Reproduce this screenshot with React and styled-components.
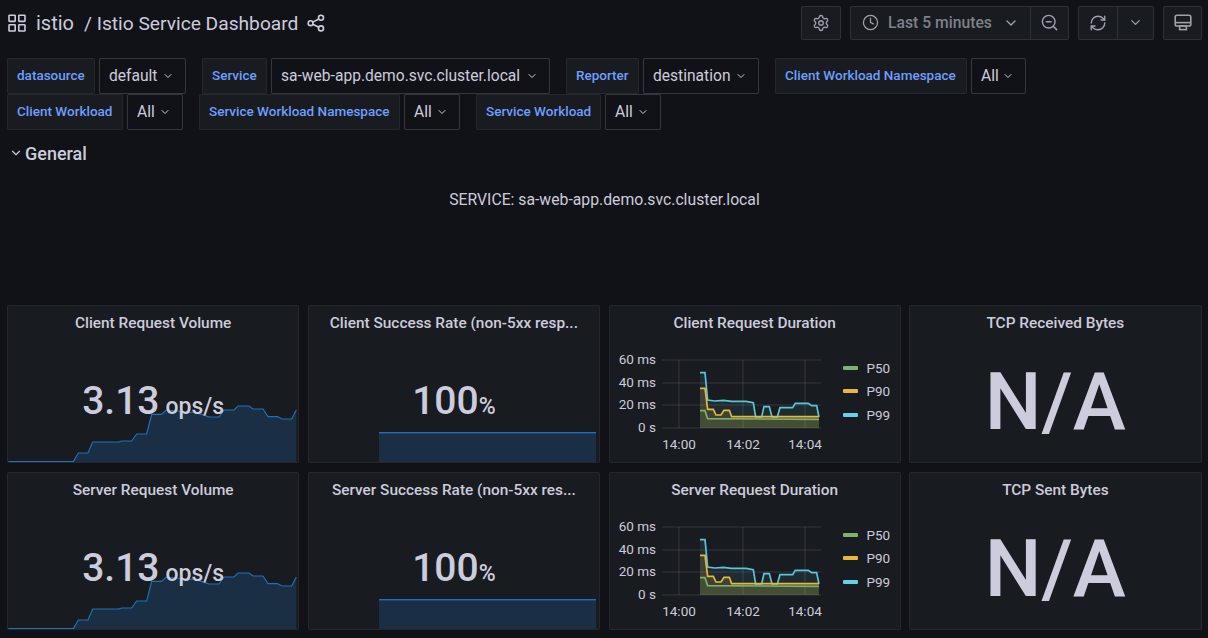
import React from "react";
import styled, { createGlobalStyle } from "styled-components";
import { ChevronDown, Clock, ZoomOut, RefreshCw, Settings } from "lucide-react";

const Global = createGlobalStyle`
  html, body { margin: 0; padding: 0; background: #111217; }
  body { font-family: Roboto, "Liberation Sans", sans-serif; color: #ccccdc; }
`;
const Page = styled.div`
  width: 1208px; height: 638px; overflow: hidden; box-sizing: border-box;
  padding: 6px 6px 0 7px; display: flex; flex-direction: column;
`;
const Toolbar = styled.header`
  display: flex; align-items: center; height: 34px; margin-bottom: 18px;
`;
const Title = styled.div`
  display: flex; align-items: center; flex: 1; color: #ccccdc; padding-left: 1px;
  svg { display: block; }
`;
const Crumb = styled.span` margin-left: ${p => p.$ml}px; font-size: ${p => p.$size}px; `;
const Actions = styled.div` display: flex; gap: 9px; `;
const BtnGroup = styled.div`
  display: flex; height: 34px; box-sizing: border-box; background: #181b1f;
  border: 1px solid rgba(204,204,220,0.12); border-radius: 2px; color: #9a9ba6;
`;
const Btn = styled.div`
  width: ${p => p.$w}px; display: flex; align-items: center; justify-content: center; gap: ${p => p.$gap || 0}px;
  font-size: 15.7px; font-weight: 500; color: #7f8089; padding-bottom: 1px; box-sizing: border-box;
  & + & { border-left: 1px solid rgba(204,204,220,0.12); }
  svg { color: #a0a1ab; }
`;
const Vars = styled.div` display: flex; flex-direction: column; `;
const VarRow = styled.div` display: flex; gap: 16px; height: 36px; `;
const VarGroup = styled.div` display: flex; gap: 4px; height: 36px; `;
const VarLabel = styled.div`
  display: flex; align-items: center; padding: 0 0 3px 9px; box-sizing: border-box;
  background: #181b1f; border: 1px solid rgba(204,204,220,0.07); border-radius: 2px;
  color: #6e9fff; font-size: 13.5px; font-weight: 500; width: ${p => p.$w}px; white-space: nowrap;
`;
const VarValue = styled.div`
  display: flex; align-items: center; padding: 0 11px 0 9px; box-sizing: border-box; justify-content: space-between;
  border: 1px solid rgba(204,204,220,0.2); border-radius: 2px; background: #111217;
  color: #ccccdc; font-size: 15.6px; width: ${p => p.$w}px; white-space: nowrap;
`;
const RowTitle = styled.div`
  display: flex; align-items: center; gap: 2px; height: 20px; margin: 13px 0 0 2px;
  font-size: 18px; font-weight: 500; color: #ccccdc;
`;
const TextPanel = styled.div`
  height: 142px; box-sizing: border-box; padding-top: 27px; text-align: center; font-size: 15.75px; color: #ccccdc;
  line-height: 20px;
`;
const Grid = styled.div`
  display: grid; grid-template-columns: repeat(4, 292.25px); column-gap: 8.5px; row-gap: 9px;
  grid-auto-rows: 158px;
`;
const Panel = styled.section`
  position: relative; background: #181b1f; border: 1px solid rgba(204,204,220,0.07); border-radius: 2px;
  box-sizing: border-box; display: flex; flex-direction: column; overflow: hidden;
`;
const PanelTitle = styled.h2`
  margin: 0; height: 33px; line-height: 35px; text-align: center; font-size: 15.4px; font-weight: 500; color: #ccccdc;
  white-space: nowrap;
`;
const StatValue = styled.div`
  position: absolute; left: 0; right: 0; top: 72px; text-align: center; font-size: 39px; line-height: 47px;
  font-weight: 500; color: #ccccdc; z-index: 2;
`;
const StatUnit = styled.span` font-size: ${p => p.$size}px; margin-left: ${p => p.$gap}px; `;
const Spark = styled.svg`
  position: absolute; left: ${p => p.$left}px; bottom: 0; display: block;
`;
const NA = styled.div`
  flex: 1; display: flex; align-items: center; justify-content: center; font-size: 80px; font-weight: 500;
  color: #ccccdc; margin-top: 3px;
`;
const ChartWrap = styled.div` display: flex; flex: 1; `;
const ChartSvg = styled.svg` display: block; flex: none; text { font-family: Roboto, sans-serif; font-size: 13.5px; fill: #ccccdc; } `;
const Legend = styled.ul`
  list-style: none; margin: 0; padding: 0; display: flex; flex-direction: column; margin-left: 5px; padding-top: 17px;
`;
const LegendItem = styled.li`
  display: flex; align-items: center; gap: 9px; height: 23.5px; font-size: 13.5px; color: #ccccdc;
  &::before { content: ""; width: 15px; height: 4px; border-radius: 1px; background: ${p => p.$c}; }
`;

const sparkPts = "22,273 218,273 233,247 262,247 276,214 355,214 362,211 393,211 408,190 438,190 453,131 482,131 497,118 530,121 560,127 575,124 605,132 625,139 655,139 670,118 700,118 712,106 745,106 757,115 787,115 802,138 830,138 845,145 873,145 887,118";

const VolumeSpark = () => (
  <Spark $left={0} width="290" height="58" viewBox="22 100 870 174">
    <polygon points={`${sparkPts} 887,274 22,274`} fill="#1a2e44" />
    <polyline points={sparkPts} fill="none" stroke="#1f70b8" strokeWidth="3.6" />
  </Spark>
);
const RateSpark = () => (
  <Spark $left={70} width="217" height="30" viewBox="0 0 217 30">
    <rect x="0" y="1" width="217" height="29" fill="#1a2e44" />
    <rect x="0" y="0" width="217" height="1.4" fill="#1f70b8" />
  </Spark>
);

const p99 = "270,98 285,98 293,180 315,183 340,181 365,184 408,184 430,188 437,231 455,231 462,200 478,200 486,231 502,231 510,203 548,203 556,190 595,190 605,197 620,197 627,231";
const p90 = "270,145 285,145 293,208 310,208 318,225 333,225 342,211 358,211 365,230 627,230";
const p50 = "270,212 285,212 293,236 627,238";

const Chart = () => (
  <ChartSvg width="228" height="124" viewBox="0 0 228 124">
    <g transform="translate(0 -5)">
    {[
      ["60 ms", 26], ["40 ms", 49], ["20 ms", 71], ["0 s", 94],
    ].map(([t, y]) => (
      <g key={t}>
        <text x="46" y={y + 3.8} textAnchor="end">{t}</text>
        <line x1="52" x2="211" y1={y} y2={y} stroke="rgba(204,204,220,0.16)" />
      </g>
    ))}
    {[[69, "14:00"], [133, "14:02"], [195, "14:04"]].map(([x, t]) => (
      <g key={t}>
        <line x1={x} x2={x} y1="26" y2="94" stroke="rgba(204,204,220,0.16)" />
        <text x={x} y="115" textAnchor="middle">{t}</text>
      </g>
    ))}
    <g transform="translate(0 6) scale(0.3333)" fill="none" strokeWidth="5">
      <polygon points={`${p99} 627,264 270,264`} fill="rgba(93,196,220,0.1)" />
      <polygon points={`${p90} 627,264 270,264`} fill="rgba(234,184,57,0.16)" />
      <polygon points={`${p50} 627,264 270,264`} fill="rgba(115,191,105,0.1)" />
      <polyline points={p99} stroke="#5dc4dc" />
      <polyline points={p90} stroke="#eab839" />
      <polyline points={p50} stroke="#7eb26d" />
    </g>
    </g>
  </ChartSvg>
);
const DurationBody = () => (
  <ChartWrap>
    <Chart />
    <Legend>
      <LegendItem $c="#7eb26d">P50</LegendItem>
      <LegendItem $c="#eab839">P90</LegendItem>
      <LegendItem $c="#66d0e6">P99</LegendItem>
    </Legend>
  </ChartWrap>
);

const Chev = ({ size = 12 }) => <ChevronDown size={size} strokeWidth={2} />;
const Var = ({ label, lw, value, vw }) => (
  <VarGroup>
    <VarLabel $w={lw}>{label}</VarLabel>
    <VarValue $w={vw}>{value}<Chev /></VarValue>
  </VarGroup>
);

const AppsIcon = () => (
  <svg width="18" height="18" viewBox="0 0 18 18" fill="none" stroke="#ccccdc" strokeWidth="1.6">
    <rect x="1" y="1.2" width="6.2" height="6.2" rx=".6" /><rect x="10.8" y="1.2" width="6.2" height="6.2" rx=".6" />
    <rect x="1" y="10.8" width="6.2" height="6.2" rx=".6" /><rect x="10.8" y="10.8" width="6.2" height="6.2" rx=".6" />
  </svg>
);
const ShareIcon = () => (
  <svg width="18" height="18" viewBox="0 0 18 18" fill="none" stroke="#ccccdc" strokeWidth="1.6" style={{ marginLeft: 9 }}>
    <circle cx="3.6" cy="9.2" r="2.4" /><circle cx="14" cy="3.8" r="2.5" /><circle cx="14" cy="14.4" r="2.5" />
    <path d="M5.8 8.1 11.8 5M5.8 10.3l6 3" />
  </svg>
);
const MonitorIcon = () => (
  <svg width="18" height="18" viewBox="0 0 18 18" fill="none" stroke="#a0a1ab" strokeWidth="1.6">
    <rect x="1.2" y="1.2" width="15.6" height="10.8" rx="1.8" /><path d="M1.2 8.6h15.6" /><rect x="5.6" y="12" width="6.8" height="3.6" />
  </svg>
);

const names = [
  ["Client Request Volume", "Client Success Rate (non-5xx resp...", "Client Request Duration", "TCP Received Bytes"],
  ["Server Request Volume", "Server Success Rate (non-5xx res...", "Server Request Duration", "TCP Sent Bytes"],
];

export default function App() {
  return (
    <Page>
      <Global />
      <Toolbar>
        <Title>
          <AppsIcon />
          <Crumb $ml={10} $size={20}>istio</Crumb>
          <Crumb $ml={10} $size={19.2}>/ Istio Service Dashboard</Crumb>
          <ShareIcon />
        </Title>
        <Actions>
          <BtnGroup><Btn $w={38}><Settings size={18} strokeWidth={1.8} /></Btn></BtnGroup>
          <BtnGroup>
            <Btn $w={179} $gap={9}><Clock size={17} strokeWidth={1.8} />Last 5 minutes<ChevronDown size={16} strokeWidth={2} style={{ marginLeft: 2 }} /></Btn>
            <Btn $w={38}><ZoomOut size={19} strokeWidth={1.8} /></Btn>
          </BtnGroup>
          <BtnGroup>
            <Btn $w={38}><RefreshCw size={18} strokeWidth={1.8} /></Btn>
            <Btn $w={36}><ChevronDown size={15} strokeWidth={2} /></Btn>
          </BtnGroup>
          <BtnGroup><Btn $w={37}><MonitorIcon /></Btn></BtnGroup>
        </Actions>
      </Toolbar>
      <Vars>
        <VarRow>
          <Var label="datasource" lw={88} value="default" vw={87} />
          <Var label="Service" lw={65} value="sa-web-app.demo.svc.cluster.local" vw={279} />
          <Var label="Reporter" lw={73} value="destination" vw={116} />
          <Var label="Client Workload Namespace" lw={192} value="All" vw={55} />
        </VarRow>
        <VarRow>
          <Var label="Client Workload" lw={116} value="All" vw={56} />
          <Var label="Service Workload Namespace" lw={201} value="All" vw={56} />
          <Var label="Service Workload" lw={125} value="All" vw={56} />
        </VarRow>
      </Vars>
      <RowTitle><Chev size={14} />General</RowTitle>
      <TextPanel>SERVICE: sa-web-app.demo.svc.cluster.local</TextPanel>
      <Grid>
        {names.map(row => row.map((n, i) => (
          <Panel key={n}>
            <PanelTitle>{n}</PanelTitle>
            {i === 0 && <><StatValue>3.13<StatUnit $size={23} $gap={6}>ops/s</StatUnit></StatValue><VolumeSpark /></>}
            {i === 1 && <><StatValue>100<StatUnit $size={23} $gap={0}>%</StatUnit></StatValue><RateSpark /></>}
            {i === 2 && <DurationBody />}
            {i === 3 && <NA>N/A</NA>}
          </Panel>
        )))}
      </Grid>
    </Page>
  );
}
